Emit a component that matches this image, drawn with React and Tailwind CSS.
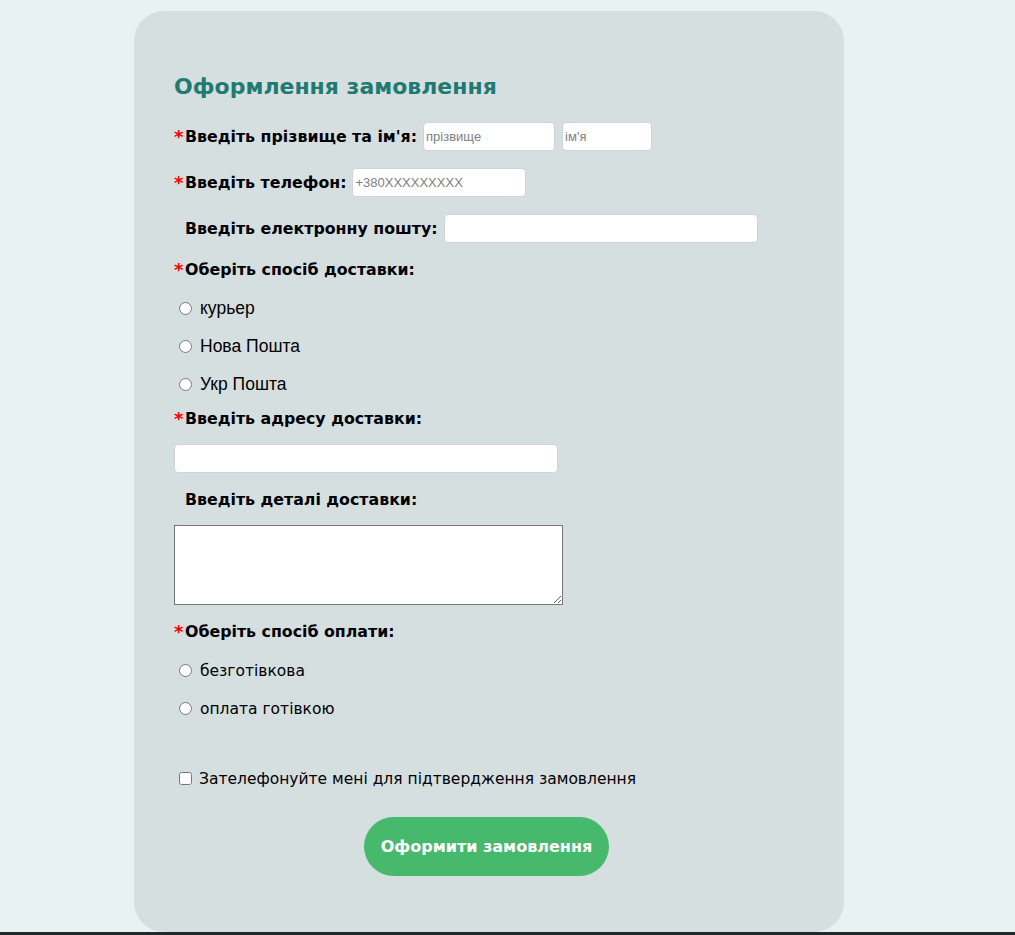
import React from "react";

const verdana = "font-['DejaVu_Sans',Verdana,sans-serif]";
const arial = "font-['Liberation_Sans',Arial,sans-serif]";

function Req() {
  return <span className="inline-block w-[11px] text-[18px] leading-none text-[#ff0000]">*</span>;
}

function Label({ required, children }) {
  return (
    <span className={`${verdana} flex items-center text-[15.8px] font-bold text-black whitespace-nowrap`}>
      {required ? <Req /> : <span className="inline-block w-[11px]" />}
      {children}
    </span>
  );
}

const field =
  "h-[29px] bg-white border border-[#cfd4d6] rounded-[4px] px-[2px] text-[13px] text-black placeholder:text-[#808080] outline-none " +
  arial;

function Radio({ name, label, font, textPad = "" }) {
  return (
    <label className={`flex items-center h-[20px] text-black ${font}`}>
      <input type="radio" name={name} className="ml-[5px] mr-[8px] w-[13px] h-[13px]" />
      <span className={textPad}>{label}</span>
    </label>
  );
}

export default function App() {
  return (
    <div className="min-h-[935px] bg-[#e8f2f0] flex flex-col">
      <div className="ml-[134px] mt-[11px] w-[710px] bg-[#d6dfe0] rounded-[30px] pt-[61px] pb-[56px] pl-[40px]">
        <h2 className={`${verdana} h-[30px] leading-[30px] text-[22px] font-bold text-[#217a72]`}>
          Оформлення замовлення
        </h2>

        <div className="flex items-center h-[29px] mt-[20px]">
          <Label required>Введіть прізвище та ім'я:</Label>
          <input className={`${field} w-[132px] ml-[6px]`} placeholder="прізвище" />
          <input className={`${field} w-[90px] ml-[7px]`} placeholder="ім'я" />
        </div>

        <div className="flex items-center h-[29px] mt-[17px]">
          <Label required>Введіть телефон:</Label>
          <input className={`${field} w-[174px] ml-[6px]`} placeholder="+380XXXXXXXXX" />
        </div>

        <div className="flex items-center h-[29px] mt-[17px]">
          <Label>Введіть електронну пошту:</Label>
          <input type="email" className={`${field} w-[314px] ml-[6px]`} />
        </div>

        <div className="flex items-center h-[20px] mt-[17px]">
          <Label required>Оберіть спосіб доставки:</Label>
        </div>

        <div className="flex flex-col gap-[18px] mt-[18px] text-[17.5px]">
          <Radio name="delivery" label="курьер" font={arial} />
          <Radio name="delivery" label="Нова Пошта" font={arial} />
          <Radio name="delivery" label="Укр Пошта" font={arial} />
        </div>

        <div className="flex items-center h-[20px] mt-[15px]">
          <Label required>Введіть адресу доставки:</Label>
        </div>
        <input className={`${field} block w-[384px] mt-[15px]`} />

        <div className="flex items-center h-[20px] mt-[17px]">
          <Label>Введіть деталі доставки:</Label>
        </div>
        <textarea className="block w-[389px] h-[80px] mt-[15px] bg-white border border-[#767676] resize" />

        <div className="flex items-center h-[20px] mt-[17px]">
          <Label required>Оберіть спосіб оплати:</Label>
        </div>

        <div className="flex flex-col gap-[18px] mt-[18px] text-[15.5px]">
          <Radio name="pay" label="безготівкова" font={verdana} textPad="pt-[3px]" />
          <Radio name="pay" label="оплата готівкою" font={verdana} textPad="pt-[3px]" />
        </div>

        <label className={`flex items-center h-[20px] mt-[50px] text-[15.5px] text-black ${verdana}`}>
          <input type="checkbox" className="ml-[5px] mr-[7px] w-[13px] h-[13px]" />
          <span className="pt-[3px]">Зателефонуйте мені для підтвердження замовлення</span>
        </label>

        <button
          type="button"
          className={`${verdana} block ml-[190px] mt-[29px] w-[245px] h-[59px] rounded-full bg-[#46b96c] text-white text-[16px] font-bold`}
        >
          Оформити замовлення
        </button>
      </div>
      <div className="mt-auto h-[3px] bg-[#1b2a2c]" />
    </div>
  );
}
